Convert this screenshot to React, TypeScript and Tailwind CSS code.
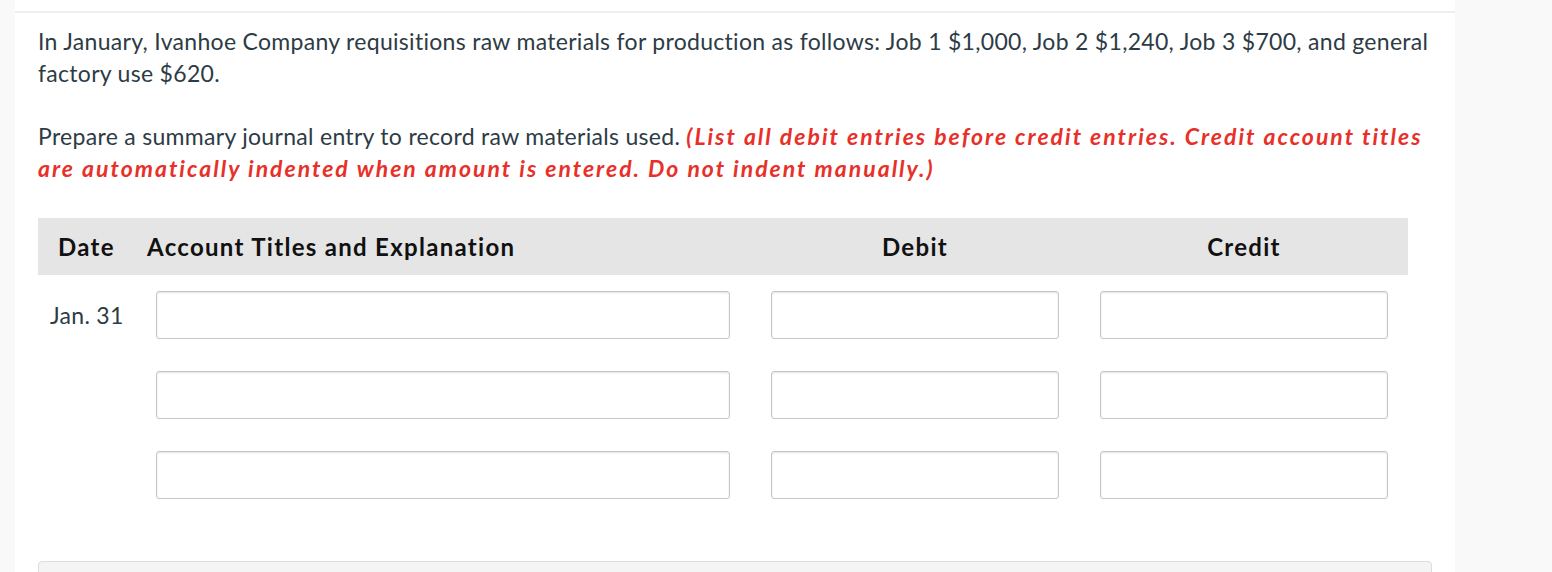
import React from 'react';

const FONT = { fontFamily: 'Lato, "Noto Sans", sans-serif' };

function Field({ className = '' }: { className?: string }) {
  return (
    <div
      className={`h-[48px] bg-white border border-[#c6c6c6] rounded-[3px] shadow-[inset_0_1px_2px_rgba(0,0,0,0.12)] ${className}`}
    />
  );
}

function EntryRow({ date }: { date?: string }) {
  return (
    <div className="flex items-center">
      <div className="w-[108px] pl-[12px] text-[23px] tracking-[0.3px] text-[#2d3b45]">{date}</div>
      <div className="w-[604px] pl-[10px]">
        <Field className="w-[574px]" />
      </div>
      <div className="w-[330px] flex justify-center">
        <Field className="w-[288px]" />
      </div>
      <div className="w-[328px] flex justify-center">
        <Field className="w-[288px]" />
      </div>
    </div>
  );
}

export default function App() {
  return (
    <div className="flex w-[1552px] h-[572px] bg-[#f9f9f9] overflow-hidden" style={FONT}>
      <div className="ml-[15px] w-[1440px] bg-white pt-[11px]">
        <div className="border-t-2 border-[#efefef] px-[23px] pt-[12px]">
          {/* Question */}
          <p className="w-[1400px] text-[23px] tracking-[0.3px] leading-[32px] text-[#2d3b45]">
            In January, Ivanhoe Company requisitions raw materials for production as follows: Job 1 $1,000, Job 2
            $1,240, Job 3 $700, and general factory use $620.
          </p>
          <p className="w-[1400px] mt-[31px] text-[23px] tracking-[0.3px] leading-[32px] text-[#2d3b45]">
            Prepare a summary journal entry to record raw materials used.{' '}
            <span className="font-bold italic text-[#e8302a] tracking-[2px]">
              (List all debit entries before credit entries. Credit account titles are automatically indented when
              amount is entered. Do not indent manually.)
            </span>
          </p>

          {/* Journal table */}
          <div className="mt-[34px] w-[1370px]">
            <div className="flex items-center h-[57px] bg-[#e5e5e5] text-[24px] tracking-[1.3px] font-bold text-[#111]">
              <div className="w-[108px] pl-[20px]">Date</div>
              <div className="w-[604px] pl-[1px]">Account Titles and Explanation</div>
              <div className="w-[330px] text-center">Debit</div>
              <div className="w-[328px] text-center">Credit</div>
            </div>
            <div className="pt-[16px] flex flex-col gap-[32px]">
              <EntryRow date="Jan. 31" />
              <EntryRow />
              <EntryRow />
            </div>
          </div>

          {/* Next panel */}
          <div className="mt-[62px] w-[1394px] h-[40px] bg-[#f4f4f4] border border-[#dcdcdc] rounded-t-[4px]" />
        </div>
      </div>
    </div>
  );
}
